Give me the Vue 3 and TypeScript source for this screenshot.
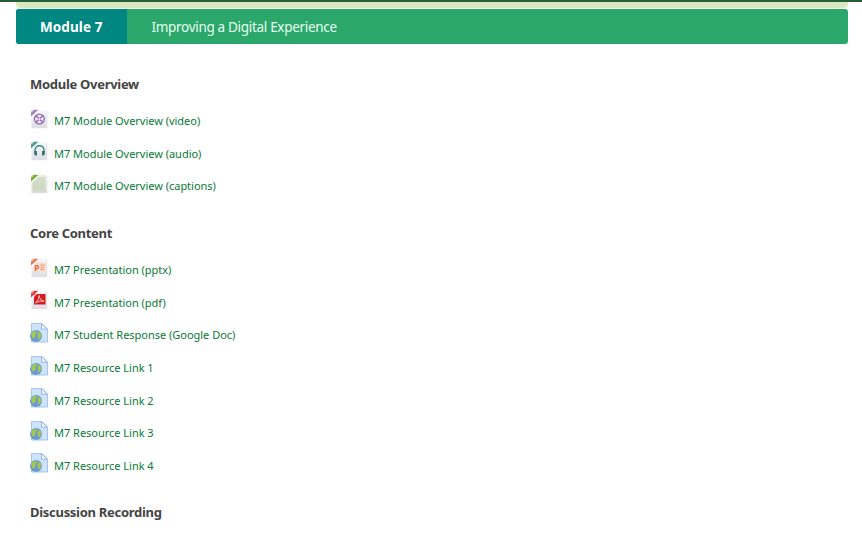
<script setup lang="ts">
type Kind = 'video' | 'audio' | 'text' | 'pptx' | 'pdf' | 'link'
interface Item { kind: Kind; label: string }
interface Section { title: string; items: Item[] }

const sections: Section[] = [
  {
    title: 'Module Overview',
    items: [
      { kind: 'video', label: 'M7 Module Overview (video)' },
      { kind: 'audio', label: 'M7 Module Overview (audio)' },
      { kind: 'text', label: 'M7 Module Overview (captions)' },
    ],
  },
  {
    title: 'Core Content',
    items: [
      { kind: 'pptx', label: 'M7 Presentation (pptx)' },
      { kind: 'pdf', label: 'M7 Presentation (pdf)' },
      { kind: 'link', label: 'M7 Student Response (Google Doc)' },
      { kind: 'link', label: 'M7 Resource Link 1' },
      { kind: 'link', label: 'M7 Resource Link 2' },
      { kind: 'link', label: 'M7 Resource Link 3' },
      { kind: 'link', label: 'M7 Resource Link 4' },
    ],
  },
  { title: 'Discussion Recording', items: [] },
]

const corner: Record<Kind, string> = {
  video: '#a27fc6',
  audio: '#4b9a8b',
  text: '#77ab2e',
  pptx: '#e8784f',
  pdf: '#e23c3c',
  link: '#8fb4e6',
}
</script>

<template>
  <div class="page">
    <div class="topline"></div>
    <div class="previous"></div>
    <header class="banner">
      <div class="number">Module 7</div>
      <div class="title">Improving a Digital Experience</div>
    </header>
    <main class="content">
      <section v-for="section in sections" :key="section.title" class="section">
        <h2 class="heading">{{ section.title }}</h2>
        <ul class="list">
          <li v-for="item in section.items" :key="item.label" class="row">
            <svg v-if="item.kind === 'link'" class="icon" viewBox="0 0 18 20">
              <path d="M1.500 .5h10.500l5.500 5.500v13h-16z" fill="#cfe3fb" stroke="#a6c4ef" />
              <path d="M11.500 .7v5.500h5.700z" fill="#f6faff" stroke="#8fb0e2" stroke-width=".9" />
              <circle cx="6" cy="13" r="6" fill="#6d9bcd" />
              <path d="M1 11Q2.500 7.700 6.500 8L7 9.500 5 11l.8 2-1.800 2.500-2-1zM8.500 9l2.300 1.500.5 2.500-1.800 3.200-2-1.200.7-2-1-1.500z" fill="#a3c94f" />
            </svg>
            <svg v-else class="icon" viewBox="0 0 18 20">
              <defs>
                <linearGradient :id="`sheet-${item.kind}`" x1="0" y1="0" x2="0" y2="1">
                  <stop offset="0" :stop-color="item.kind === 'text' ? '#eaf0e2' : '#f8f7fb'" />
                  <stop offset="1" :stop-color="item.kind === 'text' ? '#d6dcce' : '#dedee6'" />
                </linearGradient>
              </defs>
              <path d="M7 1h9.500v17.500H1.500V7z" :fill="`url(#sheet-${item.kind})`" />
              <path d="M1.500 18.700h15.200V2" fill="none" stroke="#d3d3da" stroke-width=".7" />
              <g v-if="item.kind === 'video'">
                <circle cx="9.400" cy="10" r="4.900" fill="#f3ebf8" stroke="#9067b3" stroke-width="1.300" />
                <path d="M6.200 6.800l6.400 6.400M12.600 6.800l-6.400 6.400" stroke="#9067b3" stroke-width="1.500" />
                <circle cx="9.400" cy="10" r="1.100" fill="#f7f0fb" />
              </g>
              <g v-else-if="item.kind === 'audio'">
                <path d="M5 12.500V9.300Q5 4.800 9.500 4.800T14 9.300v3.200" fill="none" stroke="#398c7e" stroke-width="1.400" />
                <path d="M4.300 10h2.700v4.500H5.300l-1-1zM12 10h2.700v3.500l-1 1H12z" fill="#32796f" />
              </g>
              <path v-else-if="item.kind === 'text'" d="M7 3h8v13.500H3V8z" fill="#cbd7bd" opacity=".75" />
              <g v-else-if="item.kind === 'pptx'">
                <rect x="4" y="4.500" width="11.500" height="10" fill="#fadccb" />
                <text class="glyph" x="4.300" y="12.700">P</text>
                <path d="M10.500 7h4M10.500 9.200h4M10.500 11.500h3.500" stroke="#ea9a70" />
              </g>
              <g v-else>
                <rect x="4" y="4" width="11.500" height="10.500" fill="#d31b20" />
                <path d="M5.500 12.800Q9 10 9.200 5.500 9.800 10.500 14 11.200 9.500 10.200 5.500 12.800z" fill="none" stroke="#ffd0cb" stroke-width=".9" />
              </g>
              <path d="M1 8L8 1 9 2 2.500 8.500z" fill="#fff" opacity=".7" />
              <path d="M1 7.500V3.500Q1 .7 4 .7H8.300Z" :fill="corner[item.kind]" />
              <path d="M.7 3.800Q3.300 3.600 4.500.5H.7z" fill="#fff" opacity=".45" />
            </svg>
            <a class="link">{{ item.label }}</a>
          </li>
        </ul>
      </section>
    </main>
  </div>
</template>

<style>
body {
  background: #fff;
  overflow: hidden;
}
</style>

<style scoped>
.page {
  height: 533px;
  overflow: hidden;
  font-family: "Noto Sans", "Open Sans", sans-serif;
}
.topline {
  height: 2px;
  background: #26603a;
}
.previous {
  height: 6px;
  margin: 0 14px 1px 16px;
  background: #d9e8c0;
  border-radius: 0 0 5px 5px;
  box-shadow: 0 1px #edf5e0;
}
.banner {
  display: flex;
  height: 35px;
  margin: 0 14px 0 16px;
  overflow: hidden;
  border-radius: 3px;
  background: #2ca76b;
  color: #fff;
  line-height: 36px;
  white-space: nowrap;
}
.number {
  box-sizing: border-box;
  width: 111px;
  padding-left: 24px;
  background: #008782;
  font-size: 13.500px;
  font-weight: 700;
  letter-spacing: 0.080px;
}
.title {
  padding-left: 24.500px;
  color: #e5fff0;
  font-size: 13.500px;
  letter-spacing: -0.310px;
}
.content {
  padding: 30px 30px 0;
}
.section {
  margin-bottom: 20.100px;
}
.heading {
  margin: 0 0 10.900px;
  font-size: 13px;
  line-height: 20px;
  font-weight: 700;
  letter-spacing: -0.290px;
  color: #444;
}
.list {
  margin: 0;
  padding: 0;
  list-style: none;
}
.row {
  display: flex;
  align-items: center;
  height: 32.650px;
}
.icon {
  flex: none;
  width: 18px;
  height: 20px;
  margin: 0 6px 5px 0;
}
.glyph {
  font-size: 8px;
  font-weight: 700;
  fill: #e26831;
}
.link {
  font-size: 11px;
  line-height: 16px;
  letter-spacing: -0.020px;
  color: #087a36;
  white-space: nowrap;
}
</style>
